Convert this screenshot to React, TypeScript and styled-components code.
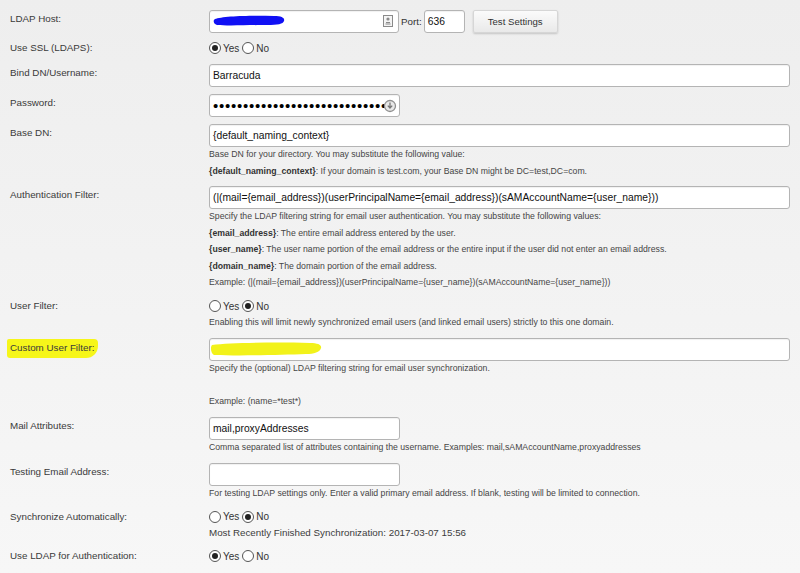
import React from "react";
import styled, { createGlobalStyle } from "styled-components";

const GlobalStyle = createGlobalStyle`
  html, body {
    margin: 0;
    padding: 0;
  }
  body {
    background: linear-gradient(#eeeeee, #f7f7f7);
    min-height: 573px;
    font-family: "Liberation Sans", Arial, sans-serif;
    color: #333;
  }
`;

const Page = styled.div`
  display: flex;
  flex-direction: column;
  gap: 7.25px;
  padding: 10px 10px 0 10px;
  width: 800px;
  box-sizing: border-box;
`;

const Row = styled.div`
  display: grid;
  grid-template-columns: 199px 1fr;
`;

const Label = styled.div<{ $pt?: number }>`
  font-size: 9.8px;
  line-height: 14px;
  color: #3a3a3a;
  padding-top: ${({ $pt }) => $pt ?? 2}px;
`;

const Marked = styled.span`
  background: #f6f61a;
  padding: 3px 4px 5px 3px;
  margin-left: -3px;
  border-radius: 2px 4px 12px 3px;
`;

const Field = styled.div`
  display: flex;
  flex-direction: column;
  min-width: 0;
`;

const Inline = styled.div`
  display: flex;
  align-items: center;
  gap: 5px;
`;

const InputBox = styled.div<{ $w?: number }>`
  position: relative;
  box-sizing: border-box;
  width: ${({ $w }) => ($w ? `${$w}px` : "100%")};
  height: 23px;
  background: #fff;
  border: 1px solid #b4b4b4;
  border-radius: 3px;
  box-shadow: inset 0 1px 1px rgba(0, 0, 0, 0.06);
  padding: 0 3px;
  font-size: 10.3px;
  line-height: 21px;
  color: #111;
  white-space: nowrap;
  overflow: hidden;
`;

const Dots = styled.span`
  font-size: 15px;
  letter-spacing: 0.75px;
  line-height: 21px;
  color: #000;
`;

const Overlay = styled.svg`
  position: absolute;
`;

const PortLabel = styled.span`
  font-size: 9.8px;
  color: #333;
  margin-left: -3px;
  margin-right: -3px;
`;

const Button = styled.button`
  height: 23px;
  width: 85px;
  margin-left: 3px;
  border: 1px solid #d6d6d6;
  border-radius: 2px;
  background: linear-gradient(#fbfbfb, #e9e9e9);
  box-shadow: 0 1px 2px rgba(0, 0, 0, 0.18);
  font-family: "Liberation Sans", Arial, sans-serif;
  font-size: 9.6px;
  color: #333;
  padding: 0;
`;

const Radios = styled.div`
  display: flex;
  align-items: center;
  height: 16px;
  font-size: 10px;
  color: #333;
`;

const Option = styled.label`
  display: flex;
  align-items: center;
  gap: 2px;
  margin-right: 3px;
`;

const Circle = styled.span<{ $on?: boolean }>`
  box-sizing: border-box;
  width: 12px;
  height: 12px;
  border-radius: 50%;
  border: 1px solid #555;
  background: #fff;
  display: flex;
  align-items: center;
  justify-content: center;
  &::after {
    content: "";
    width: 6px;
    height: 6px;
    border-radius: 50%;
    background: ${({ $on }) => ($on ? "#222" : "transparent")};
  }
`;

const Help = styled.div<{ $mt?: number }>`
  font-size: 8.7px;
  line-height: 16.5px;
  color: #454545;
  margin-top: ${({ $mt }) => $mt ?? -1}px;
  b {
    font-weight: bold;
    color: #333;
  }
`;

const Status = styled.div`
  font-size: 9.8px;
  line-height: 16.5px;
  color: #3c3c3c;
`;

const Radio = ({ yes }: { yes: boolean }) => (
  <Radios>
    <Option>
      <Circle $on={yes} />
      Yes
    </Option>
    <Option>
      <Circle $on={!yes} />
      No
    </Option>
  </Radios>
);

const dots = "•".repeat(30);

export default function App() {
  return (
    <>
      <GlobalStyle />
      <Page>
        <Row>
          <Label>LDAP Host:</Label>
          <Inline>
            <InputBox $w={190}>
              <Overlay width="80" height="16" style={{ left: 2, top: 2 }}>
                <path
                  d="M3 6 C10 3, 40 2, 62 3 C70 3, 73 5, 72 8 C71 11, 66 12, 55 12 C40 12, 15 13, 5 12 C1 11, 1 7, 3 6 Z"
                  fill="#1010f4"
                />
              </Overlay>
              <Overlay width="12" height="13" style={{ right: 4, top: 4 }}>
                <rect x="1.5" y="0.5" width="9" height="11" fill="#f4f4f4" stroke="#8a8a8a" />
                <circle cx="6" cy="4" r="1.6" fill="#8a8a8a" />
                <path d="M3.5 9 h5 M4 7.5 h4" stroke="#8a8a8a" strokeWidth="1" />
              </Overlay>
            </InputBox>
            <PortLabel>Port:</PortLabel>
            <InputBox $w={41}>636</InputBox>
            <Button>Test Settings</Button>
          </Inline>
        </Row>

        <Row>
          <Label $pt={1}>Use SSL (LDAPS):</Label>
          <Radio yes />
        </Row>

        <Row>
          <Label>Bind DN/Username:</Label>
          <InputBox>Barracuda</InputBox>
        </Row>

        <Row>
          <Label>Password:</Label>
          <InputBox $w={191}>
            <Dots>{dots}</Dots>
            <Overlay width="14" height="14" style={{ right: 2, top: 4 }}>
              <circle cx="7" cy="7" r="5.5" fill="#e8e8e8" stroke="#8f8f8f" strokeWidth="1.3" />
              <path d="M7 3.5 v5 M4.8 6.6 L7 9 L9.2 6.6" stroke="#777" strokeWidth="1.3" fill="none" />
            </Overlay>
          </InputBox>
        </Row>

        <Row>
          <Label>Base DN:</Label>
          <Field>
            <InputBox>{"{default_naming_context}"}</InputBox>
            <Help>Base DN for your directory. You may substitute the following value:</Help>
            <Help $mt={0}>
              <b>{"{default_naming_context}"}</b>: If your domain is test.com, your Base DN might be
              DC=test,DC=com.
            </Help>
          </Field>
        </Row>

        <Row>
          <Label>Authentication Filter:</Label>
          <Field>
            <InputBox>
              {"(|(mail={email_address})(userPrincipalName={email_address})(sAMAccountName={user_name}))"}
            </InputBox>
            <Help>
              Specify the LDAP filtering string for email user authentication. You may substitute the
              following values:
            </Help>
            <Help $mt={0}>
              <b>{"{email_address}"}</b>: The entire email address entered by the user.
            </Help>
            <Help $mt={0}>
              <b>{"{user_name}"}</b>: The user name portion of the email address or the entire input if
              the user did not enter an email address.
            </Help>
            <Help $mt={0}>
              <b>{"{domain_name}"}</b>: The domain portion of the email address.
            </Help>
            <Help $mt={0}>
              {"Example: (|(mail={email_address})(userPrincipalName={user_name})(sAMAccountName={user_name}))"}
            </Help>
          </Field>
        </Row>

        <Row>
          <Label $pt={1}>User Filter:</Label>
          <Field>
            <Radio yes={false} />
            <Help $mt={0}>
              Enabling this will limit newly synchronized email users (and linked email users) strictly
              to this one domain.
            </Help>
          </Field>
        </Row>

        <Row>
          <Label $pt={3}>
            <Marked>Custom User Filter:</Marked>
          </Label>
          <Field>
            <InputBox>
              <Overlay width="116" height="20" style={{ left: 0, top: 1 }}>
                <path
                  d="M2 5 C20 3, 60 2, 100 3 C108 3, 112 5, 111 8 C110 12, 104 14, 96 14 C70 15, 30 16, 4 15 C1 14, 0 7, 2 5 Z"
                  fill="#f2f21a"
                />
              </Overlay>
            </InputBox>
            <Help>Specify the (optional) LDAP filtering string for email user synchronization.</Help>
            <Help $mt={17}>Example: (name=*test*)</Help>
          </Field>
        </Row>

        <Row>
          <Label>Mail Attributes:</Label>
          <Field>
            <InputBox $w={191}>mail,proxyAddresses</InputBox>
            <Help>
              Comma separated list of attributes containing the username. Examples:
              mail,sAMAccountName,proxyaddresses
            </Help>
          </Field>
        </Row>

        <Row>
          <Label>Testing Email Address:</Label>
          <Field>
            <InputBox $w={191} />
            <Help>
              For testing LDAP settings only. Enter a valid primary email address. If blank, testing will
              be limited to connection.
            </Help>
          </Field>
        </Row>

        <Row>
          <Label $pt={1}>Synchronize Automatically:</Label>
          <Field>
            <Radio yes={false} />
            <Status>Most Recently Finished Synchronization: 2017-03-07 15:56</Status>
          </Field>
        </Row>

        <Row>
          <Label $pt={1}>Use LDAP for Authentication:</Label>
          <Radio yes />
        </Row>
      </Page>
    </>
  );
}
